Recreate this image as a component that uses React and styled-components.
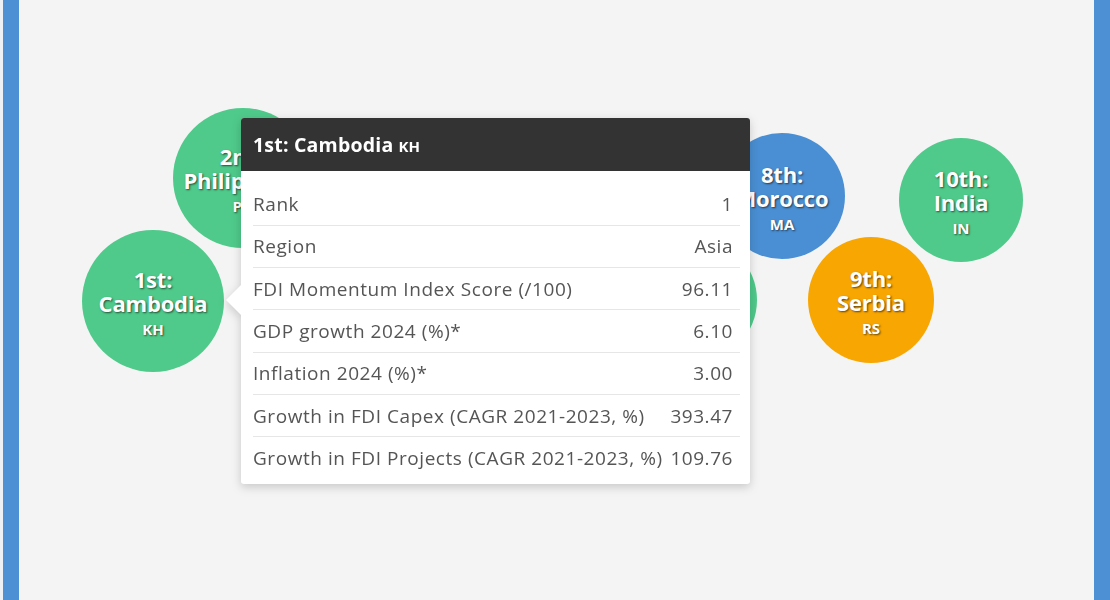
import styled, { createGlobalStyle } from 'styled-components';

const GlobalStyle = createGlobalStyle`
  html, body { margin: 0; padding: 0; }
  body {
    background: #edf1f6;
    font-family: "Open Sans", "Liberation Sans", sans-serif;
  }
`;

const bubbles = [
  { id: 'ph', rank: '2nd:', name: 'Philippines', code: 'PH', x: 243, y: 178, r: 70, color: '#4fca8a' },
  { id: 'x7', rank: '', name: '', code: '', x: 694, y: 300, r: 63, color: '#4fca8a' },
  { id: 'ma', rank: '8th:', name: 'Morocco', code: 'MA', x: 782, y: 196, r: 63, color: '#4a8fd3' },
  { id: 'in', rank: '10th:', name: 'India', code: 'IN', x: 961, y: 200, r: 62, color: '#4fca8a' },
  { id: 'rs', rank: '9th:', name: 'Serbia', code: 'RS', x: 871, y: 300, r: 63, color: '#f8a602' },
  { id: 'kh', rank: '1st:', name: 'Cambodia', code: 'KH', x: 153, y: 301, r: 71, color: '#4fca8a' },
];

const rows = [
  ['Rank', '1'],
  ['Region', 'Asia'],
  ['FDI Momentum Index Score (/100)', '96.11'],
  ['GDP growth 2024 (%)*', '6.10'],
  ['Inflation 2024 (%)*', '3.00'],
  ['Growth in FDI Capex (CAGR 2021-2023, %)', '393.47'],
  ['Growth in FDI Projects (CAGR 2021-2023, %)', '109.76'],
];

// frame content starts at x = 19
const OFFSET = 19;

function App() {
  return (
    <>
      <GlobalStyle />
      <Frame>
        {bubbles.map(b => (
          <Bubble key={b.id} $x={b.x - b.r - OFFSET} $y={b.y - b.r} $size={b.r * 2} $color={b.color}>
            {b.rank && <BubbleLine>{b.rank}</BubbleLine>}
            {b.name && <BubbleLine>{b.name}</BubbleLine>}
            {b.code && <BubbleCode>{b.code}</BubbleCode>}
          </Bubble>
        ))}

        <Tooltip>
          <Arrow />
          <Card>
            <Header>
              1st: Cambodia <small>KH</small>
            </Header>
            <Table>
              <tbody>
                {rows.map(([label, value]) => (
                  <Row key={label}>
                    <Label>{label}</Label>
                    <Value>{value}</Value>
                  </Row>
                ))}
              </tbody>
            </Table>
          </Card>
        </Tooltip>
      </Frame>
    </>
  );
}

export default App;

const Frame = styled.div`
  position: relative;
  margin-left: 3px;
  height: 600px;
  border-left: 16px solid #4d90d3;
  border-right: 16px solid #4d90d3;
  background: #f4f4f4;
  overflow: hidden;
`;

const Bubble = styled.div`
  position: absolute;
  left: ${p => p.$x}px;
  top: ${p => p.$y}px;
  width: ${p => p.$size}px;
  height: ${p => p.$size}px;
  box-sizing: border-box;
  padding-top: 5px;
  border-radius: 50%;
  background: ${p => p.$color};
  display: flex;
  flex-direction: column;
  align-items: center;
  justify-content: center;
  color: #fff;
  font-weight: 700;
  text-shadow: 1px 1px 2px rgba(0, 0, 0, 0.6);
  text-align: center;
`;

const BubbleLine = styled.div`
  font-size: 22px;
  line-height: 24px;
  letter-spacing: -0.2px;
`;

const BubbleCode = styled.div`
  font-size: 15px;
  line-height: 24px;
  margin-top: 2px;
`;

const Tooltip = styled.div`
  position: absolute;
  left: ${241 - OFFSET}px;
  top: 118px;
  width: 509px;
  filter: drop-shadow(0 3px 5px rgba(0, 0, 0, 0.18));
`;

const Arrow = styled.div`
  position: absolute;
  left: -15px;
  top: 167px;
  width: 0;
  height: 0;
  border-top: 15px solid transparent;
  border-bottom: 15px solid transparent;
  border-right: 15px solid #fff;
`;

const Card = styled.div`
  background: #fff;
  border-radius: 3px;
  overflow: hidden;
`;

const Header = styled.div`
  background: #333;
  color: #fff;
  height: 53px;
  padding: 0 12px;
  display: flex;
  align-items: center;
  gap: 5px;
  font-size: 19.5px;
  font-weight: 700;
  letter-spacing: 0.2px;

  small {
    font-size: 15px;
    font-weight: 700;
    margin-top: 3px;
  }
`;

const Table = styled.table`
  width: 487px;
  margin: 12px 11px 5px 12px;
  border-collapse: collapse;
  color: #555;
  font-size: 19px;
  letter-spacing: 0.55px;
`;

const Row = styled.tr`
  height: 42.3px;
  border-bottom: 1px solid #e6e6e6;
  &:last-child { border-bottom: none; }
`;

const Label = styled.td`
  padding: 0;
  white-space: nowrap;
`;

const Value = styled.td`
  padding: 0 7px 0 0;
  text-align: right;
  white-space: nowrap;
`;
